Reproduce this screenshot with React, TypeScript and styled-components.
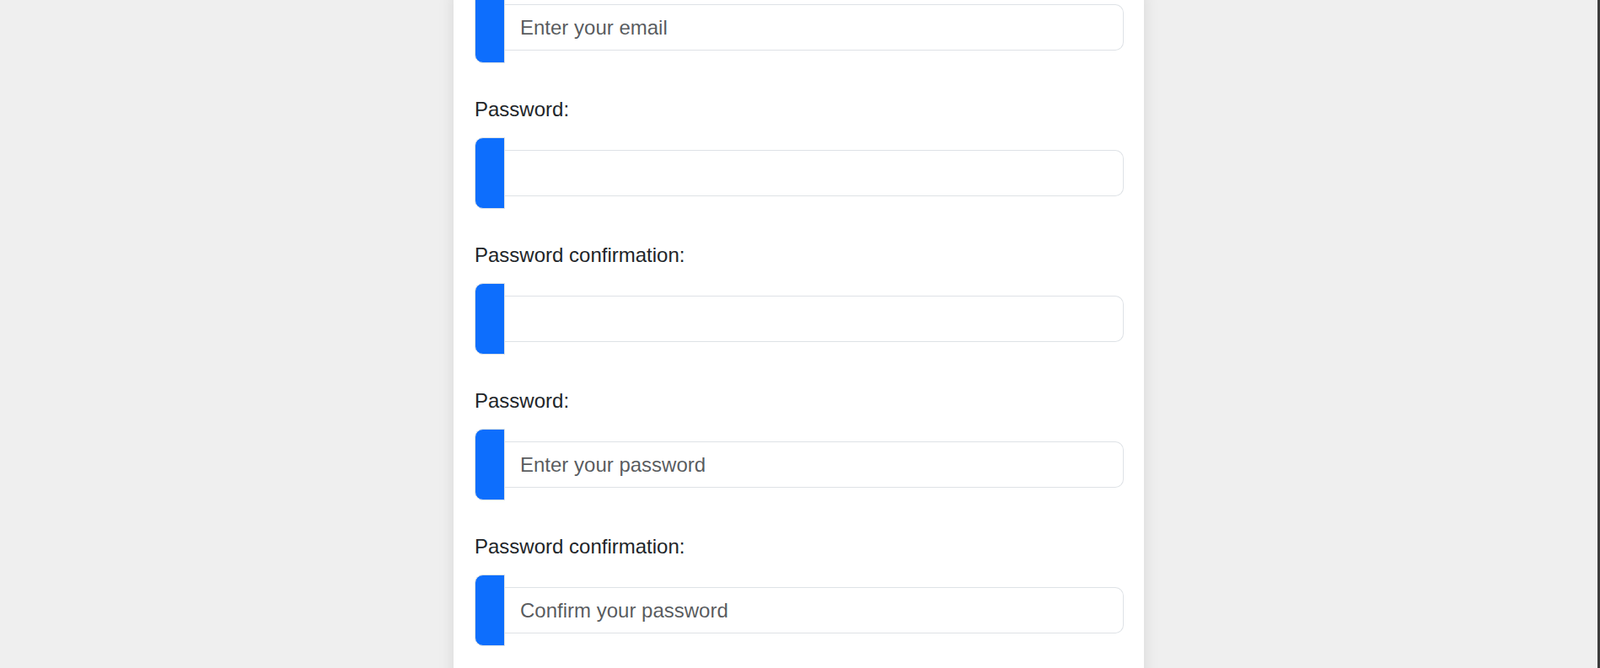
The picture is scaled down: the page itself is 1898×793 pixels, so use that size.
import React from "react";
import styled, { createGlobalStyle } from "styled-components";

const Global = createGlobalStyle`
  html, body { margin: 0; padding: 0; height: 100%; overflow: hidden; }
  body { background: #efefef; font-family: "Liberation Sans", Arial, sans-serif; }
  #root { height: 100%; }
`;

const Page = styled.div`
  display: flex;
  height: 793px;
  overflow: hidden;
`;

const Main = styled.main`
  flex: 1;
  display: flex;
  justify-content: center;
  align-items: flex-start;
`;

const Strip = styled.div`
  width: 3px;
  flex: 0 0 3px;
  background: #3c3c3c;
`;

const Card = styled.form`
  width: 770px;
  padding: 0 24px 60px 25px;
  background: #ffffff;
  box-shadow: 0 0 18px rgba(0, 0, 0, 0.1);
  margin-top: -10px;
`;

const Group = styled.div<{ $first?: boolean }>`
  margin-top: ${(p) => (p.$first ? "0" : "37px")};
`;

const Label = styled.label`
  display: block;
  font-size: 24px;
  line-height: 36px;
  color: #212529;
  margin-bottom: 15px;
`;

const InputGroup = styled.div`
  display: flex;
  align-items: center;
`;

const Addon = styled.span`
  box-sizing: border-box;
  width: 36px;
  height: 85px;
  flex: 0 0 36px;
  background: #0d6efd;
  border: 1px solid #dee2e6;
  border-radius: 10px 0 0 10px;
`;

const Field = styled.input`
  box-sizing: border-box;
  flex: 1;
  min-width: 0;
  height: 55px;
  padding: 9px 18px;
  font-family: "Liberation Sans", Arial, sans-serif;
  font-size: 24px;
  line-height: 36px;
  color: #212529;
  background: #fff;
  border: 1px solid #dee2e6;
  border-left: none;
  border-radius: 0 10px 10px 0;
  outline: none;
  &::placeholder {
    color: rgba(33, 37, 41, 0.75);
  }
`;

type Row = { label?: string; type: string; placeholder?: string };

const rows: Row[] = [
  { type: "email", placeholder: "Enter your email" },
  { label: "Password:", type: "password" },
  { label: "Password confirmation:", type: "password" },
  { label: "Password:", type: "password", placeholder: "Enter your password" },
  { label: "Password confirmation:", type: "password", placeholder: "Confirm your password" },
];

export default function App() {
  return (
    <>
      <Global />
      <Page>
        <Main>
          <Card onSubmit={(e) => e.preventDefault()}>
            {rows.map((r, i) => (
              <Group key={i} $first={i === 0}>
                {r.label && <Label>{r.label}</Label>}
                <InputGroup>
                  <Addon />
                  <Field type={r.type} placeholder={r.placeholder} />
                </InputGroup>
              </Group>
            ))}
          </Card>
        </Main>
        <Strip />
      </Page>
    </>
  );
}
